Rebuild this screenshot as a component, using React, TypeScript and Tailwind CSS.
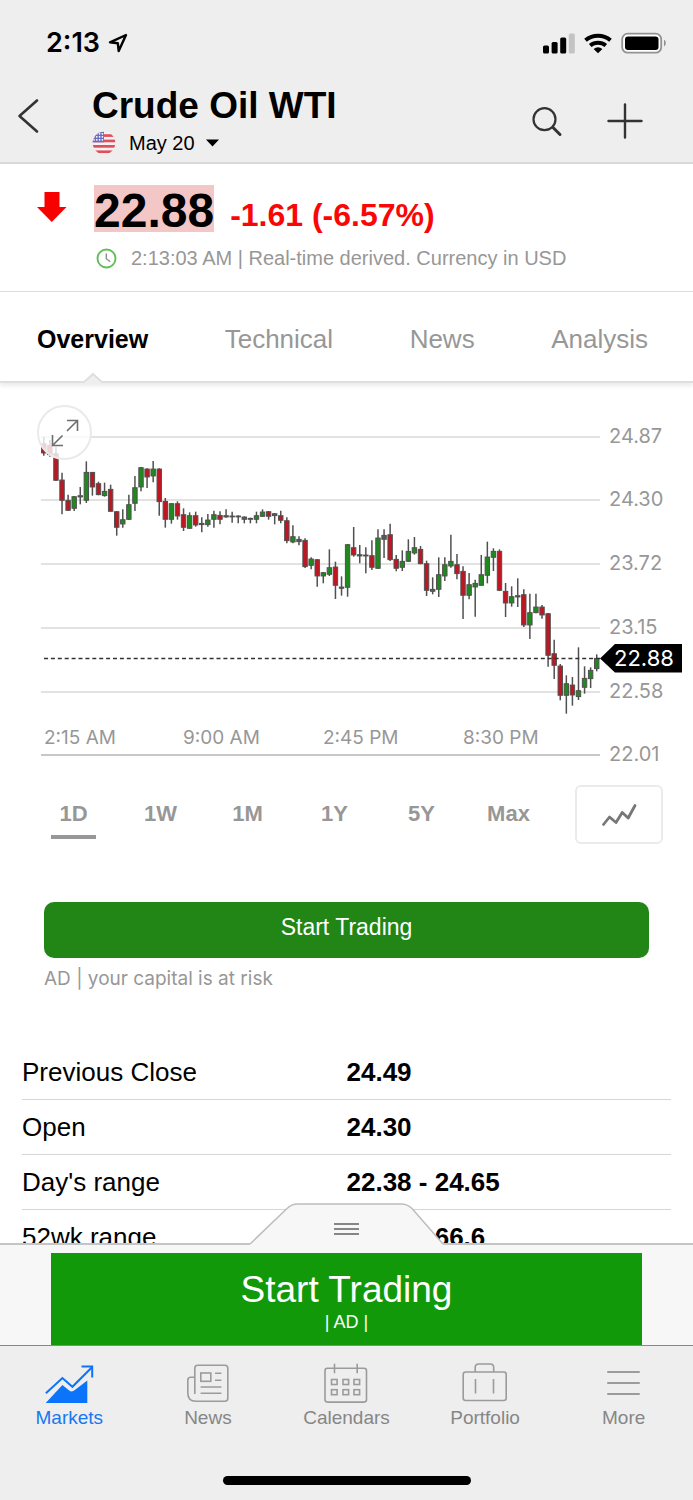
import React from "react";

type Candle = [high: number, top: number, bottom: number, low: number, kind: "r" | "g" | "d"];

// One entry per interval, measured downwards from the top of the plot in thirds of a unit.
const candles: Candle[] = [
  [125, 145, 175, 182, "r"], [135, 150, 180, 185, "r"], [155, 175, 257, 257, "r"], [233, 254, 317, 358, "r"],
  [299, 315, 347, 348, "r"], [303, 304, 341, 348, "g"], [276, 301, 307, 328, "d"], [199, 231, 317, 324, "g"],
  [231, 231, 277, 302, "r"], [260, 265, 300, 301, "r"], [263, 288, 303, 305, "g"], [269, 282, 350, 350, "r"],
  [348, 349, 398, 422, "r"], [343, 373, 388, 398, "g"], [299, 328, 374, 375, "g"], [243, 277, 326, 348, "g"],
  [216, 217, 277, 289, "g"], [220, 221, 247, 279, "r"], [198, 221, 244, 262, "g"], [220, 221, 321, 362, "r"],
  [309, 318, 374, 398, "r"], [324, 325, 374, 386, "g"], [319, 325, 364, 374, "r"], [340, 358, 398, 408, "r"],
  [352, 361, 401, 401, "g"], [350, 361, 391, 395, "r"], [367, 384, 390, 412, "d"], [357, 374, 390, 395, "g"],
  [347, 358, 374, 398, "g"], [349, 360, 374, 388, "r"], [343, 361, 367, 368, "d"], [350, 362, 366, 383, "d"],
  [361, 362, 366, 385, "d"], [364, 365, 374, 385, "d"], [368, 369, 374, 385, "d"], [350, 361, 374, 385, "g"],
  [343, 350, 365, 366, "g"], [348, 349, 365, 374, "r"], [354, 355, 363, 388, "d"], [347, 361, 377, 385, "r"],
  [367, 376, 438, 445, "r"], [391, 424, 442, 445, "g"], [424, 432, 441, 451, "d"], [430, 435, 516, 519, "r"],
  [487, 491, 512, 523, "g"], [492, 493, 544, 575, "r"], [531, 532, 544, 565, "g"], [463, 517, 539, 543, "g"],
  [500, 515, 572, 612, "r"], [544, 575, 581, 602, "d"], [447, 448, 578, 605, "g"], [396, 457, 481, 485, "r"],
  [450, 478, 484, 505, "d"], [457, 479, 484, 535, "d"], [436, 481, 518, 525, "r"], [403, 428, 521, 521, "g"],
  [403, 420, 434, 489, "d"], [386, 418, 495, 498, "r"], [480, 492, 521, 529, "r"], [466, 498, 518, 528, "g"],
  [433, 468, 500, 501, "g"], [426, 457, 475, 479, "g"], [453, 462, 507, 508, "r"], [497, 505, 587, 603, "r"],
  [547, 582, 590, 598, "d"], [487, 538, 584, 606, "g"], [487, 508, 544, 558, "g"], [419, 498, 514, 518, "g"],
  [477, 508, 537, 553, "r"], [514, 528, 602, 672, "r"], [534, 568, 602, 613, "g"], [554, 564, 577, 665, "g"],
  [480, 538, 572, 572, "g"], [440, 485, 542, 565, "g"], [460, 468, 488, 528, "g"], [463, 468, 587, 588, "r"],
  [564, 588, 625, 666, "r"], [574, 604, 625, 635, "g"], [550, 601, 607, 636, "d"], [583, 598, 691, 696, "r"],
  [596, 652, 691, 732, "g"], [596, 635, 654, 655, "g"], [630, 635, 661, 671, "r"], [654, 655, 782, 815, "r"],
  [734, 775, 812, 852, "r"], [807, 812, 902, 916, "r"], [841, 865, 902, 956, "g"], [846, 869, 901, 932, "r"],
  [757, 886, 906, 915, "g"], [814, 849, 878, 896, "g"], [817, 825, 852, 879, "g"], [778, 789, 822, 829, "g"],
];

const candleFill = { r: "#c01622", g: "#1f8a1c", d: "#5a5a5a" };

const priceLines = [
  { y: 42, label: "24.87" },
  { y: 105, label: "24.30" },
  { y: 169, label: "23.72" },
  { y: 233, label: "23.15" },
  { y: 297, label: "22.58" },
  { y: 360, label: "22.01" },
];

const timeLabels = [
  { x: 44, label: "2:15 AM" },
  { x: 183, label: "9:00 AM" },
  { x: 323, label: "2:45 PM" },
  { x: 463, label: "8:30 PM" },
];

function StatusBar() {
  return (
    <div className="flex h-[84px] items-center pl-[46px] pr-[27px] pt-[2px]">
      <span className="font-['Inter',sans-serif] text-[27px] font-semibold leading-8">2:13</span>
      <svg className="ml-[8px]" width="20" height="20" viewBox="0 0 20 20" fill="none" stroke="#000" strokeWidth="2.4" strokeLinejoin="round">
        <path d="M18 2 2 9.3l7.8.9.9 7.8z" />
      </svg>
      <svg className="ml-auto" width="124" height="24" viewBox="0 0 124 24">
        <rect x="1" y="14.5" width="6" height="8" rx="1.5" />
        <rect x="9.6" y="11" width="6" height="11.5" rx="1.5" />
        <rect x="18.2" y="6.5" width="6" height="16" rx="1.5" />
        <rect x="26.8" y="2.5" width="6" height="20" rx="1.5" fill="#c3c3c3" />
        <g fill="none" stroke="#000" strokeWidth="4">
          <path d="M43.5 9.2a19.5 19.5 0 0 1 25 0" />
          <path d="M48.2 14.5a12.4 12.4 0 0 1 15.6 0" />
        </g>
        <path d="M56 22.3l-4.4-4.2a7 7 0 0 1 8.8 0z" />
        <rect x="80.2" y="2.7" width="39" height="19" rx="5.5" fill="#fff" stroke="#929292" strokeWidth="1.8" />
        <rect x="83" y="5.5" width="33.5" height="13.5" rx="3" />
        <path d="M122 8.8c2.4.8 2.4 5.8 0 6.6z" fill="#929292" />
      </svg>
    </div>
  );
}

function UsFlag() {
  return (
    <svg width="24" height="24" viewBox="0 0 24 24">
      <defs>
        <clipPath id="flag-round">
          <circle cx="12" cy="12" r="11.3" />
        </clipPath>
      </defs>
      <g clipPath="url(#flag-round)">
        <rect width="24" height="24" fill="#f6f1f2" />
        {[3.2, 8.6, 14, 19.4].map((y) => (
          <rect key={y} y={y} width="24" height="2.7" fill="#e0505c" />
        ))}
        <rect width="12" height="11.3" fill="#6a6cc0" />
        {[2, 5, 8].map((y) =>
          [2, 4.8, 7.6, 10.4].map((x) => <circle key={`${x}-${y}`} cx={x} cy={y + 0.8} r="0.9" fill="#fff" />)
        )}
      </g>
    </svg>
  );
}

function Header() {
  return (
    <header className="shrink-0 border-b-2 border-[#d9d9d9] bg-[#eeeeee]">
      <StatusBar />
      <div className="flex h-[78px] items-start pl-[17px] pr-[50px]">
        <button aria-label="Back" className="mt-[13px]">
          <svg width="24" height="38" viewBox="0 0 24 38" fill="none" stroke="#333" strokeWidth="2.6" strokeLinecap="round" strokeLinejoin="round">
            <path d="M20 3.5 2.5 19 20 34.5" />
          </svg>
        </button>
        <div className="ml-[51px] mt-[1px]">
          <h1 className="text-[37px] font-bold leading-[42px]">Crude Oil WTI</h1>
          <button className="flex items-center text-[20px] leading-8">
            <UsFlag />
            <span className="ml-[13px]">May 20</span>
            <svg className="ml-[11px]" width="13" height="8" viewBox="0 0 13 8">
              <path d="M0 .5h13L6.5 7.5z" />
            </svg>
          </button>
        </div>
        <button aria-label="Search" className="ml-auto mt-[22px]">
          <svg width="32" height="32" viewBox="0 0 32 32" fill="none" stroke="#333" strokeLinecap="round">
            <circle cx="13.5" cy="13.2" r="11" strokeWidth="2.2" />
            <path d="M22 21.5l7 7" strokeWidth="3" />
          </svg>
        </button>
        <button aria-label="Add to watchlist" className="ml-[44px] mt-[19px]">
          <svg width="36" height="36" viewBox="0 0 36 36" stroke="#333" strokeWidth="2.4" strokeLinecap="round">
            <path d="M18 1.5v33M1.5 18h33" />
          </svg>
        </button>
      </div>
    </header>
  );
}

function Quote() {
  return (
    <section className="border-b border-[#dddddd] pb-[19px] pl-[37px] pt-[21px]">
      <div className="flex items-start">
        <svg className="mt-[7px]" width="30" height="30" viewBox="0 0 30 30">
          <path d="M7.5 0h15v15H29.5L14.8 30 0 15H7.5z" fill="#f70000" />
        </svg>
        <span className="ml-[27px] bg-[#f4c7c7] pt-[4px] text-[48px] font-bold leading-[43px]">22.88</span>
        <span className="ml-[16px] pt-[12px] text-[32px] font-bold leading-9 text-[#fb0606]">-1.61 (-6.57%)</span>
      </div>
      <div className="ml-[59px] mt-[11px] flex items-center text-[20px] leading-7 text-[#979797]">
        <svg width="21" height="21" viewBox="0 0 21 21" fill="none">
          <circle cx="10.5" cy="10.5" r="9" stroke="#5fbf55" strokeWidth="1.9" />
          <path d="M10.3 5.5v5.2l4 3" stroke="#8d8d8d" strokeWidth="1.4" />
        </svg>
        <span className="ml-[14px] whitespace-nowrap">2:13:03 AM | Real-time derived. Currency in USD</span>
      </div>
    </section>
  );
}

function Tabs() {
  return (
    <nav className="flex justify-between border-b-2 border-[#dfdfdf] pl-[37px] pr-[45px] text-[26px] text-[#979797] shadow-[0_3px_4px_rgba(0,0,0,0.08)]">
      <button className="relative h-[89px] pb-[2px] pt-[8px] text-[25px] font-bold text-black">
        Overview
        <svg className="absolute -bottom-[2px] left-1/2 -ml-[9px]" width="18" height="10" viewBox="0 0 18 10">
          <path d="M0 9 9 1l9 8v1H0z" fill="#efefef" />
          <path d="M0 9 9 1l9 8" fill="none" stroke="#dedede" strokeWidth="2" />
        </svg>
      </button>
      <button className="pb-[2px] pt-[8px]">Technical</button>
      <button className="pb-[2px] pt-[8px]">News</button>
      <button className="pb-[2px] pt-[8px]">Analysis</button>
    </nav>
  );
}

function Chart() {
  return (
    <section className="relative mt-[12px]">
      <svg className="block w-full" viewBox="0 0 693 375" role="img" aria-label="Crude Oil WTI one day price chart">
        {priceLines.map(({ y, label }, i) => (
          <g key={label}>
            <path d={`M41 ${y}H600`} stroke={i === 5 ? "#b4b4b4" : "#d9d9d9"} strokeWidth="1.4" />
            <text x="609" y={y + 6} fontSize="20" fill="#979797" fontFamily="Inter, sans-serif">
              {label}
            </text>
          </g>
        ))}
        {timeLabels.map(({ x, label }) => (
          <text key={label} x={x} y="349" fontSize="19" fill="#979797" fontFamily="Inter, sans-serif">
            {label}
          </text>
        ))}
        {candles.map(([high, top, bottom, low, kind], i) => {
          const x = 43.8 + i * 6.076;
          return (
            <g key={i}>
              <path d={`M${x} ${high / 3}V${low / 3}`} stroke="#505050" strokeWidth="1.5" />
              <rect
                x={x - 2.2}
                y={top / 3 + 0.4}
                width="4.4"
                height={Math.max((bottom - top) / 3 - 0.8, 0.8)}
                fill={candleFill[kind]}
                stroke="#505050"
                strokeWidth="1"
              />
            </g>
          );
        })}
        <path d="M44 263.5H600" stroke="#333" strokeWidth="1.5" strokeDasharray="4 2.9" />
        <path d="M600 263.5 615 249h67v28.5h-67z" />
        <text x="614" y="271" fontSize="22" fill="#fff" fontFamily="Inter, sans-serif">
          22.88
        </text>
      </svg>
      <button aria-label="Expand chart" className="absolute left-[37px] top-[10px] flex size-[55px] items-center justify-center rounded-full border-2 border-[#eaeaea] bg-white/80">
        <svg width="28" height="28" viewBox="0 0 28 28" fill="none" stroke="#6e6e6e" strokeWidth="1.6">
          <path d="M16 1.5h10.5V12M26.5 1.5 16 12" />
          <path d="M1.5 16v10.5H12M1.5 26.5l10-10" />
        </svg>
      </button>
    </section>
  );
}

function RangePicker() {
  return (
    <div className="mt-[15px] flex items-center gap-[23px] px-[30px]">
      <div className="grid flex-1 grid-cols-6 justify-items-center text-[22px] font-bold text-[#979797]">
        <button className="mt-[4px] w-[45px] border-b-4 border-[#979797] pb-[1px] leading-10">1D</button>
        {["1W", "1M", "1Y", "5Y", "Max"].map((range) => (
          <button key={range} className="mt-[4px] pb-[5px] leading-10">
            {range}
          </button>
        ))}
      </div>
      <button aria-label="Chart type" className="flex h-[59px] w-[88px] items-center justify-center rounded-md border-2 border-[#ebebeb]">
        <svg width="36" height="24" viewBox="0 0 36 24" fill="none" stroke="#777" strokeWidth="2.8" strokeLinecap="round" strokeLinejoin="round">
          <path d="M2.5 21.5 8.5 14l6.5 5.5L21.2 9.500l6 5.500L34 2.500" />
        </svg>
      </button>
    </div>
  );
}

const stats = [
  ["Previous Close", "24.49"],
  ["Open", "24.30"],
  ["Day's range", "22.38 - 24.65"],
  ["52wk range", "17.12 - 66.6"],
];

function Stats() {
  return (
    <div className="mt-[52px] px-[22px] pb-10">
      <table className="w-full table-fixed text-left text-[26px] leading-[54px]">
        <tbody>
          {stats.map(([name, value]) => (
            <tr key={name} className="border-b border-[#d6d6d6]">
              <th scope="row" className="p-0 font-normal">{name}</th>
              <td className="p-0 font-bold">{value}</td>
            </tr>
          ))}
        </tbody>
      </table>
    </div>
  );
}

function AdPanel() {
  return (
    <aside className="relative flex h-[103px] justify-center border-b border-t-2 border-b-[#888888] border-t-[#c4c4c4] bg-[#f7f7f7] px-[51px] pt-[8px]">
      <button aria-label="Drag ad panel" className="absolute -top-[42px] left-1/2 -ml-[97px]">
        <svg className="block" width="194" height="42" viewBox="0 0 194 42" fill="none">
          <path d="M0 41 37 5.5Q41.500 1 47.500 1H151Q157.500 1 162 5.500L193 41v1H0z" fill="#f7f7f7" />
          <path d="M0 41 37 5.5Q41.500 1 47.500 1H151Q157.500 1 162 5.500L193 41" stroke="#bdbdbd" strokeWidth="1.5" />
          <path d="M84 21h25M84 26h25M84 31h25" stroke="#868686" strokeWidth="2" />
        </svg>
      </button>
      <a href="#trade" className="flex-1 bg-[#12990a] pt-[17px] text-center text-white">
        <span className="block text-[37px] leading-10">Start Trading</span>
        <span className="block text-[18px] leading-6">| AD |</span>
      </a>
    </aside>
  );
}

function MarketsIcon() {
  return (
    <svg width="52" height="44" viewBox="0 0 52 44" fill="none">
      <path d="M2.9 31.3 19.4 16l10 8.8L49 5.2" stroke="#0b74fb" strokeWidth="2" />
      <path d="M38.5 4.5h10.7v11" stroke="#0b74fb" strokeWidth="2" />
      <path d="M2.7 41 19.4 23l6.8 5.5q2.8 2 5.6-.5L44.300 18.500V41z" fill="#0b74fb" />
    </svg>
  );
}

function NewsIcon() {
  return (
    <svg width="52" height="44" viewBox="0 0 52 44" fill="none" stroke="#9b9b9b" strokeWidth="1.6">
      <path d="M12.8 32V6.3q0-3 3-3h27q3 0 3 3v30q0 3-3 3H14q-8.2 0-8.2-8.3V18.300q0-3 3-3h4" />
      <rect x="18.8" y="11" width="10" height="8.3" />
      <path d="M33 11.3h6.4M33 18.3h6.4M18.6 25h20.8M18.6 31.3h20.8" />
    </svg>
  );
}

function CalendarIcon() {
  return (
    <svg width="52" height="44" viewBox="0 0 52 44" fill="none" stroke="#9b9b9b" strokeWidth="1.6">
      <rect x="5" y="6.3" width="41.5" height="33.8" rx="2.5" />
      <path d="M14.5 1.8v9.5M37.2 1.8v9.5" />
      {[17.5, 27.7].map((y) => [11.5, 23, 34].map((x) => <rect key={`${x}-${y}`} x={x} y={y} width="5.6" height="5" />))}
    </svg>
  );
}

function PortfolioIcon() {
  return (
    <svg width="52" height="44" viewBox="0 0 52 44" fill="none" stroke="#9b9b9b" strokeWidth="1.6">
      <rect x="4.2" y="10" width="43" height="28.5" rx="2.5" />
      <path d="M16.2 10V5.5q0-3.500 3.500-3.500h11.500q3.500 0 3.500 3.500V10M16.500 17v14.500M34.500 17v14.500" />
    </svg>
  );
}

function MoreIcon() {
  return (
    <svg width="52" height="44" viewBox="0 0 52 44" stroke="#9b9b9b" strokeWidth="2" strokeLinecap="round">
      <path d="M10 10h31M10 21h31M10 32h31" />
    </svg>
  );
}

const navItems = [
  { label: "Markets", Icon: MarketsIcon },
  { label: "News", Icon: NewsIcon },
  { label: "Calendars", Icon: CalendarIcon },
  { label: "Portfolio", Icon: PortfolioIcon },
  { label: "More", Icon: MoreIcon },
];

function BottomNav() {
  return (
    <footer className="flex h-[154px] flex-col bg-[#eeeeee] pt-[16px]">
      <nav className="grid grid-cols-5 text-[19px] leading-6 text-[#868686]">
        {navItems.map(({ label, Icon }, i) => (
          <a key={label} href={`#${label.toLowerCase()}`} className={i === 0 ? "flex flex-col items-center text-[#1877f2]" : "flex flex-col items-center"}>
            <Icon />
            <span>{label}</span>
          </a>
        ))}
      </nav>
      <div className="mx-auto mb-[15px] mt-auto h-[9px] w-[248px] rounded-full bg-black" />
    </footer>
  );
}

export default function App() {
  return (
    <div className="flex h-screen flex-col bg-white font-['Liberation_Sans',Arial,sans-serif] text-black">
      <Header />
      <main className="min-h-0 flex-1 overflow-y-auto [scrollbar-width:none]">
        <Quote />
        <Tabs />
        <Chart />
        <RangePicker />
        <div className="mt-[58px] px-[44px]">
          <button className="block h-[56px] w-full rounded-[10px] bg-[#228617] pb-[5px] text-[23px] text-white">Start Trading</button>
          <p className="mt-[7px] font-['Inter',sans-serif] text-[19px] leading-7 text-[#979797]">AD | your capital is at risk</p>
        </div>
        <Stats />
      </main>
      <div className="shrink-0">
        <AdPanel />
        <BottomNav />
      </div>
    </div>
  );
}
